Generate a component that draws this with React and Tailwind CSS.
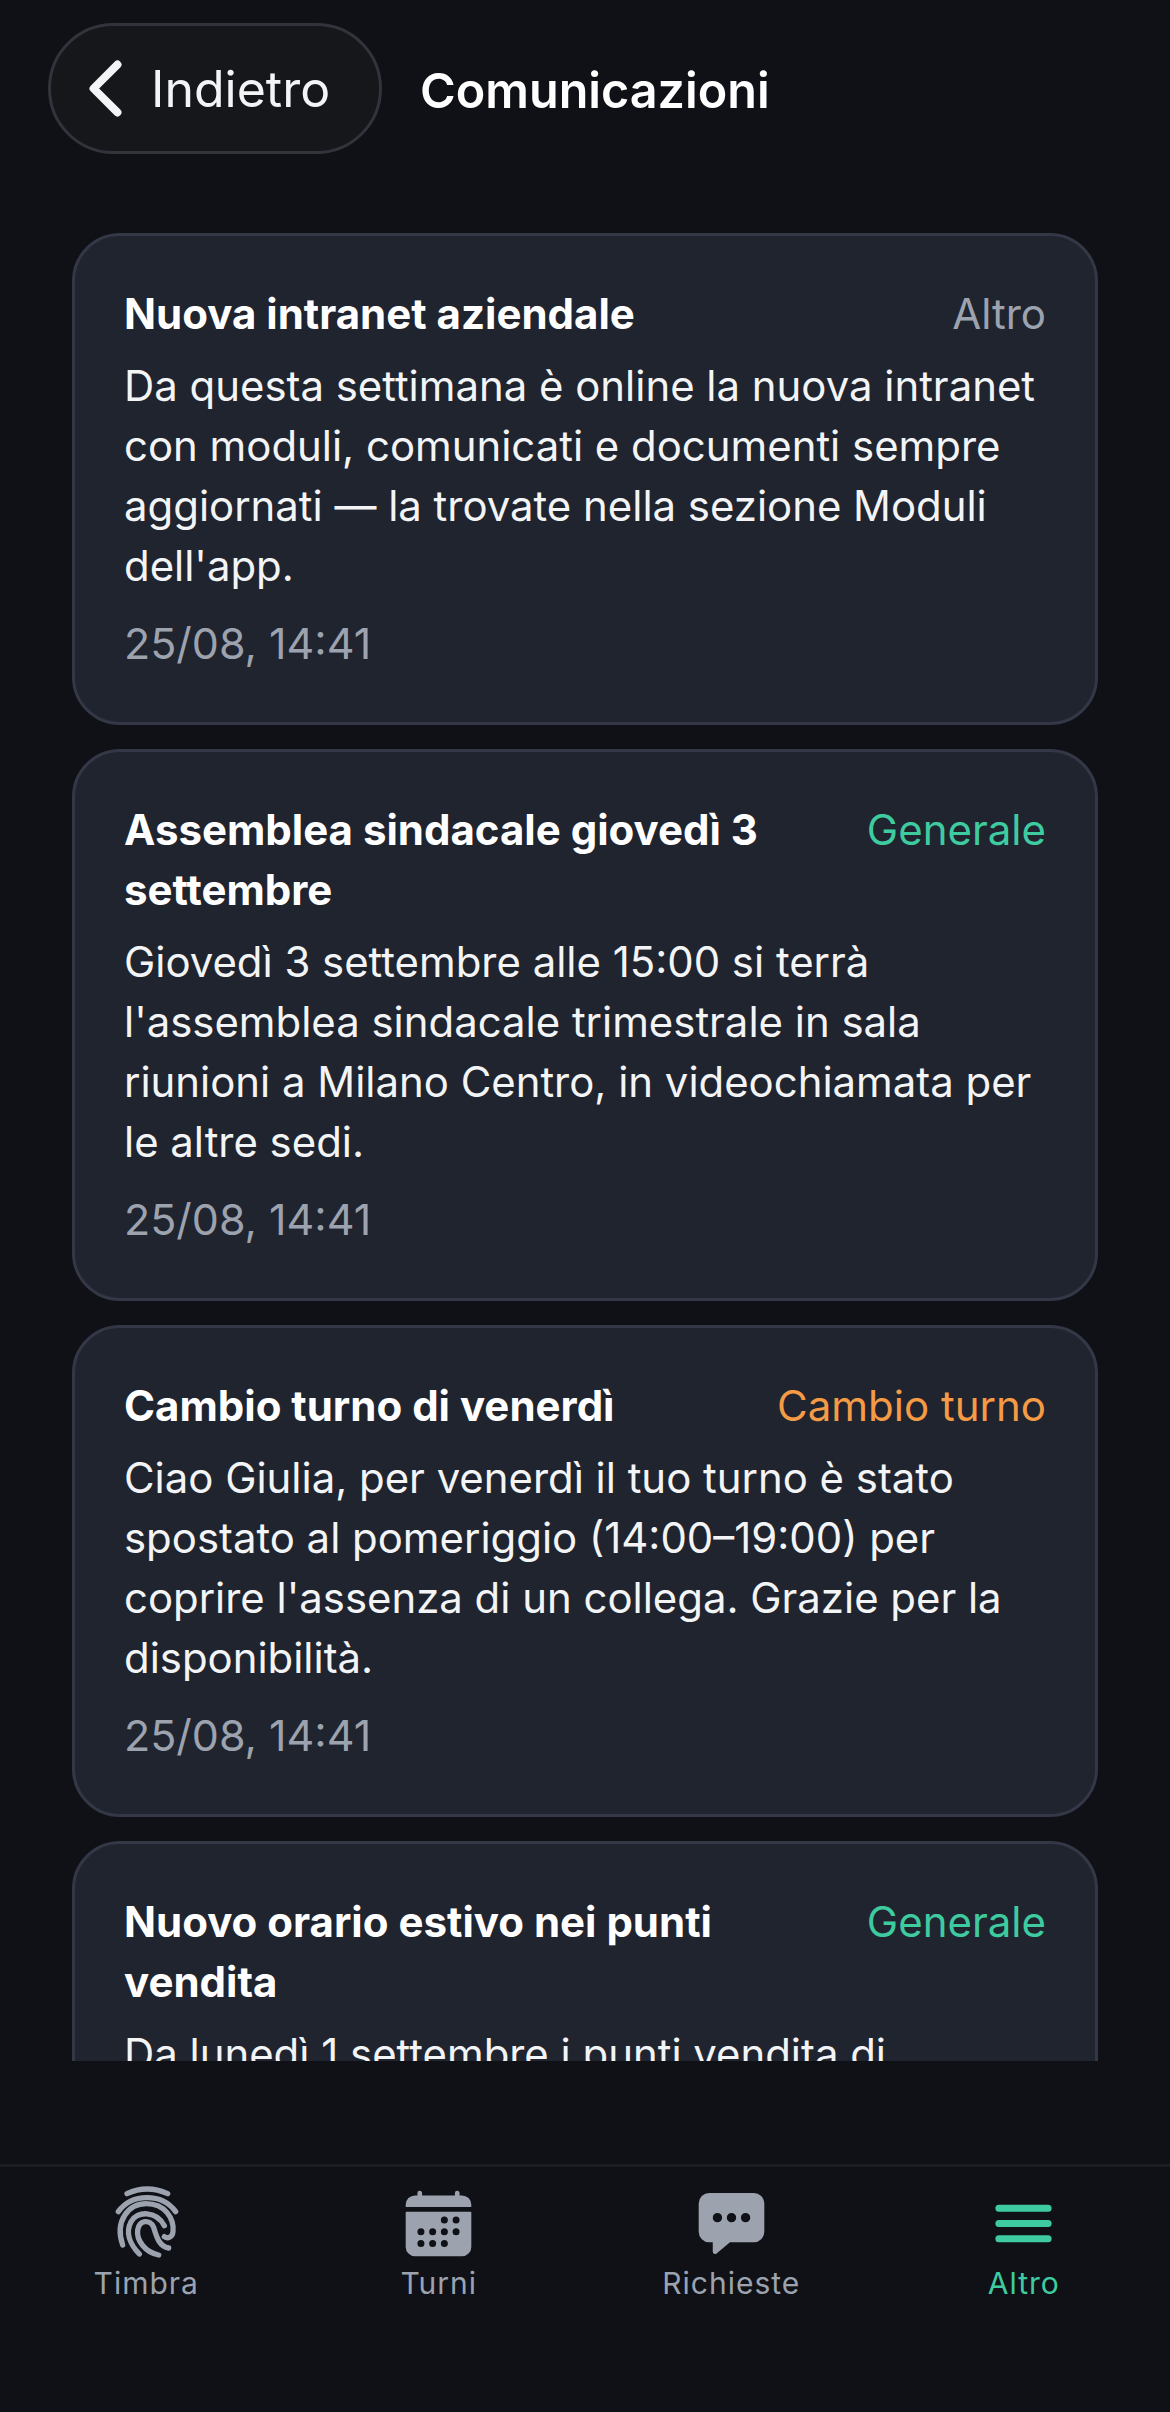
import React from "react";
import { IoChevronBack, IoCalendar, IoChatboxEllipses, IoMenu } from "react-icons/io5";

const cards = [
  { title: "Nuova intranet aziendale", tag: "Altro", tagClass: "text-[#9ca3af]", body: "Da questa settimana è online la nuova intranet con moduli, comunicati e documenti sempre aggiornati — la trovate nella sezione Moduli dell'app.", date: "25/08, 14:41" },
  { title: "Assemblea sindacale giovedì 3 settembre", tag: "Generale", tagClass: "text-[#3fcba0]", body: "Giovedì 3 settembre alle 15:00 si terrà l'assemblea sindacale trimestrale in sala riunioni a Milano Centro, in videochiamata per le altre sedi.", date: "25/08, 14:41" },
  { title: "Cambio turno di venerdì", tag: "Cambio turno", tagClass: "text-[#f59a45]", body: "Ciao Giulia, per venerdì il tuo turno è stato spostato al pomeriggio (14:00–19:00) per coprire l'assenza di un collega. Grazie per la disponibilità.", date: "25/08, 14:41" },
  { title: "Nuovo orario estivo nei punti vendita", tag: "Generale", tagClass: "text-[#3fcba0]", body: "Da lunedì 1 settembre i punti vendita di Milano\u00a0Centro e Torino Lingotto apriranno un'ora prima del solito.", date: "25/08, 14:41" },
];

function FingerprintIcon({ className }) {
  return (
    <svg viewBox="56 51 225 225" className={className} fill="none" stroke="currentColor" strokeWidth="16" strokeLinecap="round">
      <path d="M110 74 Q170 46 232 74" />
      <path d="M84 128 C125 72 215 72 256 128" />
      <path d="M97 228 C72 155 115 104 168 104 C225 104 252 150 248 188 C246 205 232 210 222 203" />
      <path d="M147 255 C118 225 105 190 122 158 C140 125 198 124 222 170" />
      <path d="M205 258 C165 250 138 215 142 183 C147 152 180 150 190 175 C198 200 205 232 235 237" />
    </svg>
  );
}

const tabs = [
  { label: "Timbra", Icon: FingerprintIcon },
  { label: "Turni", Icon: IoCalendar },
  { label: "Richieste", Icon: IoChatboxEllipses },
  { label: "Altro", Icon: IoMenu, active: true },
];

export default function App() {
  return (
    <div className="flex h-[2412px] w-[1170px] flex-col overflow-hidden bg-[#0f1116] font-['Inter',sans-serif] text-white">
      <header className="flex h-[233px] shrink-0 items-start gap-[38px] pl-[48px] pt-[23px]">
        <div className="flex h-[131px] w-[334px] items-center gap-[3px] rounded-[66px] border-[3px] border-[#31343a] bg-[#15171b] pl-[12px]">
          <IoChevronBack className="size-[85px] shrink-0 text-[#f3f4f6]" />
          <span className="text-[50px] leading-none text-[#f3f4f6]">Indietro</span>
        </div>
        <h1 className="mt-[44px] text-[48.5px] leading-none font-semibold">Comunicazioni</h1>
      </header>
      <main className="flex h-[1828px] shrink-0 flex-col gap-[24px] overflow-hidden px-[72px]">
        {cards.map((c) => (
          <article key={c.title} className="shrink-0 rounded-[48px] border-[3px] border-[#343846] bg-[#20242f] px-[49px] pt-[48px] pb-[49px]">
            <div className="flex items-start justify-between gap-[36px]">
              <h2 className="text-[42px] leading-[60px] font-bold">{c.title}</h2>
              <span className={`shrink-0 text-[42px] leading-[60px] ${c.tagClass}`}>{c.tag}</span>
            </div>
            <p className="mt-[12px] text-[41.9px] leading-[60px] text-[#f3f4f6]">{c.body}</p>
            <p className="mt-[17px] text-[43px] leading-[60px] text-[#9ca3af]">{c.date}</p>
          </article>
        ))}
      </main>
      <div className="h-[103px] shrink-0" />
      <nav className="grid flex-1 grid-cols-4 border-t-[3px] border-[#1a1d22] pt-[19px]">
        {tabs.map(({ label, Icon, active }) => (
          <div key={label} className={`flex flex-col items-center ${active ? "text-[#3fcba0]" : "text-[#9ca3af]"}`}>
            <Icon className="size-[75px]" />
            <span className="mt-[4px] text-[30px] leading-[36px] tracking-[1px]">{label}</span>
          </div>
        ))}
      </nav>
    </div>
  );
}
